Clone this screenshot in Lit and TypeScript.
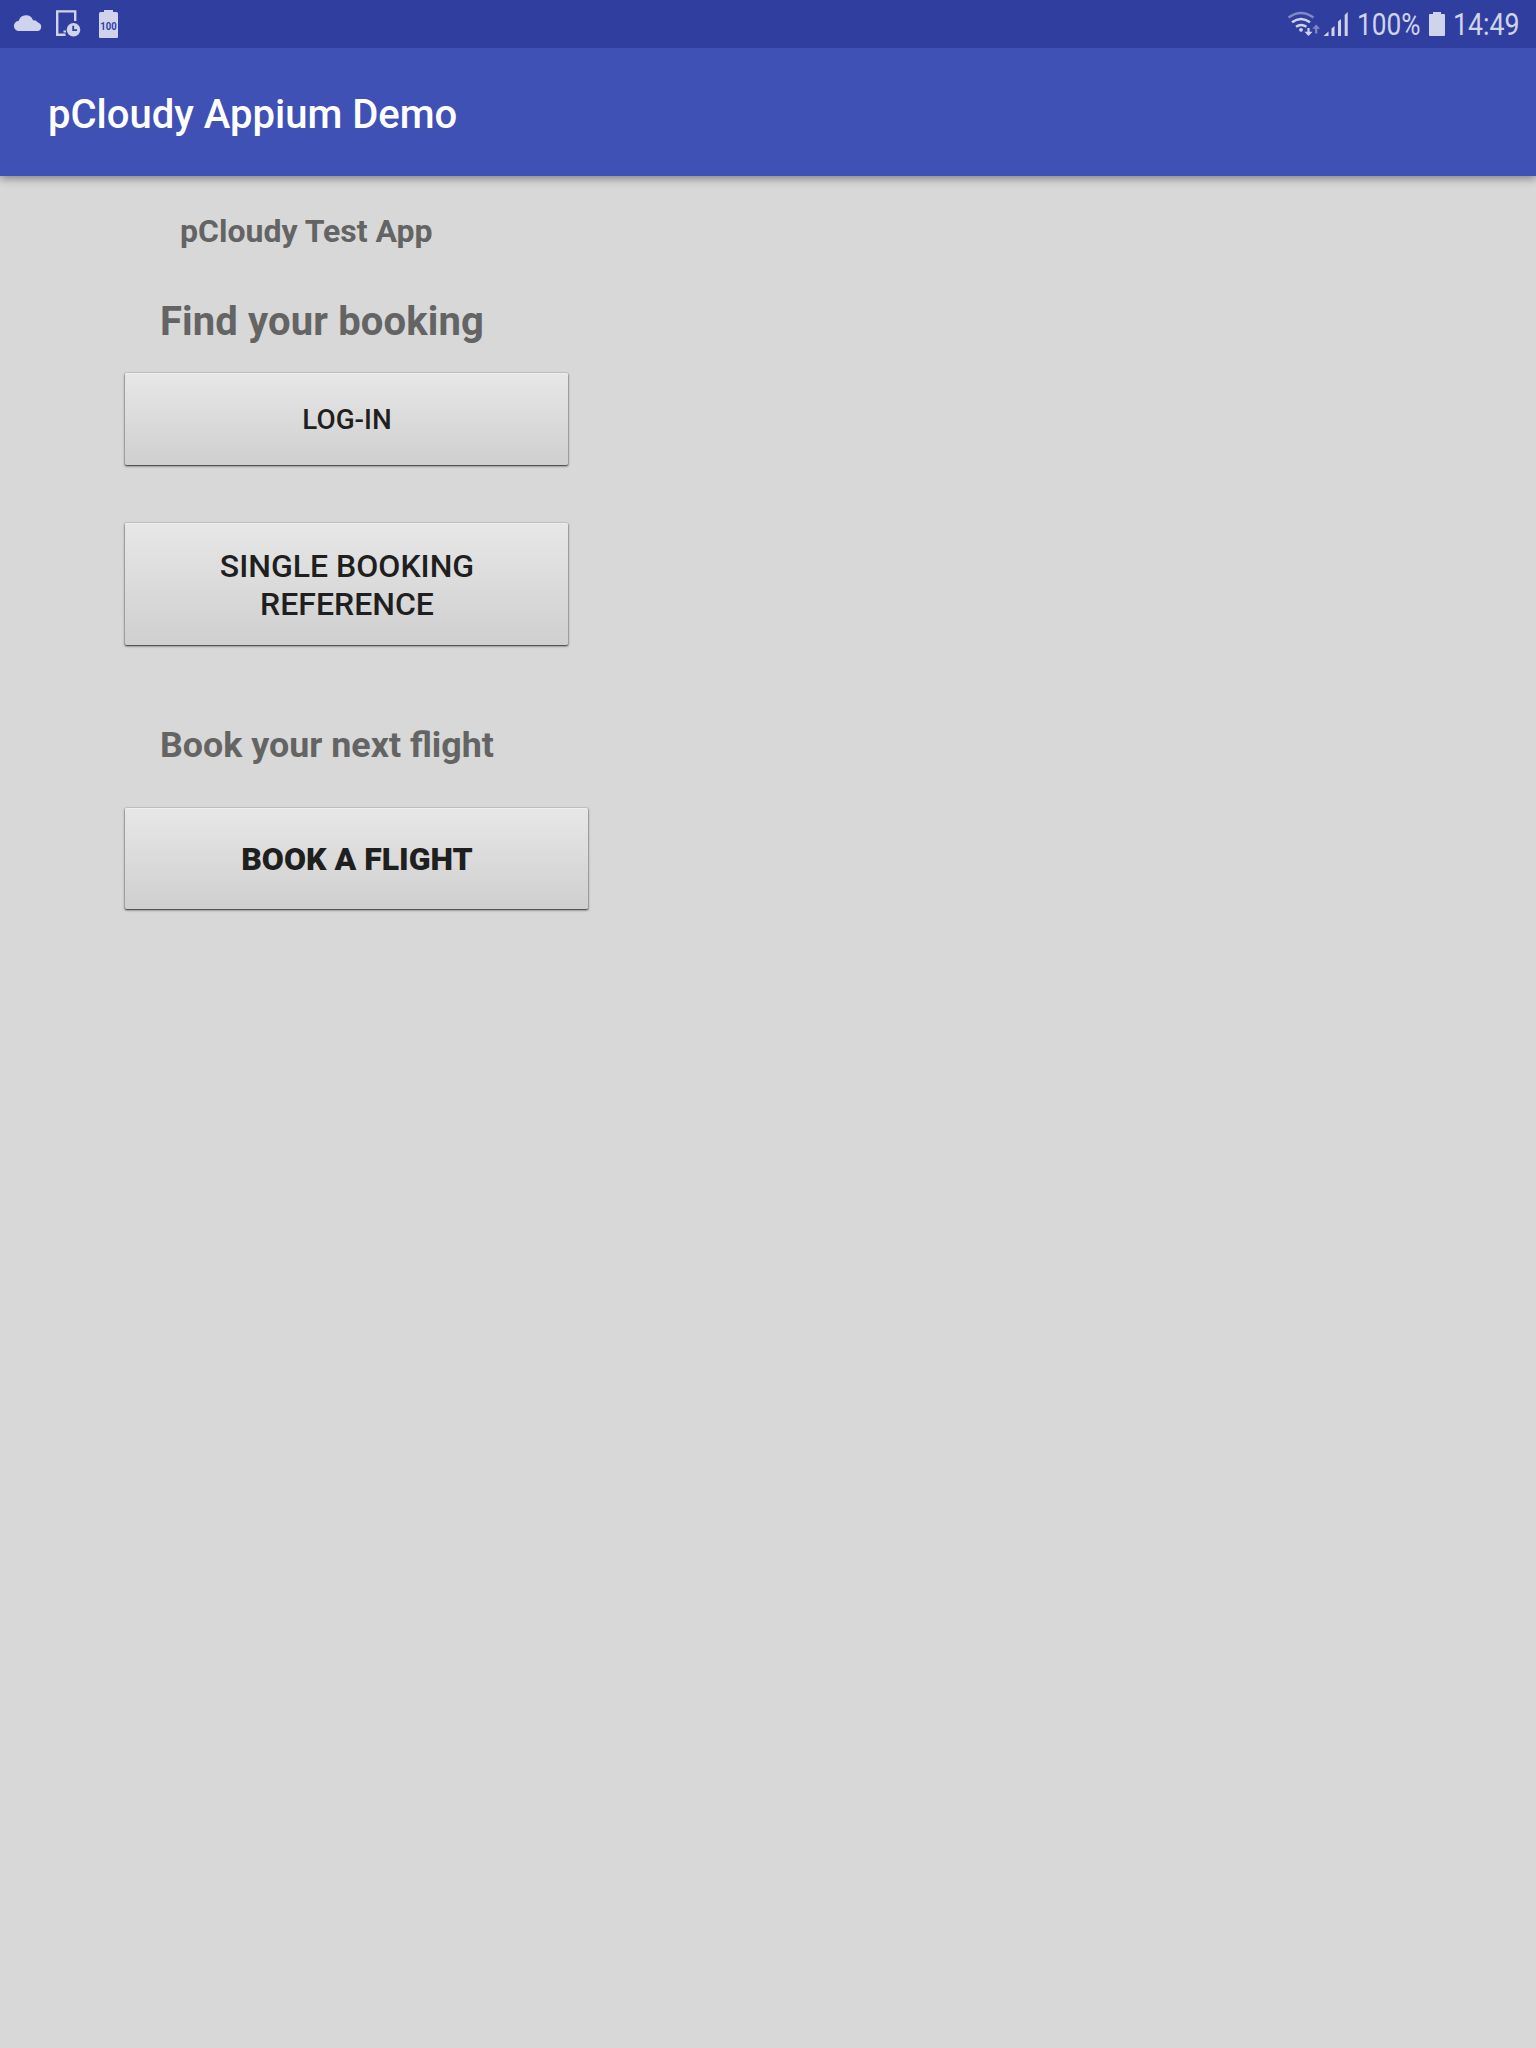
import { LitElement, html, css } from "lit";
import { customElement } from "lit/decorators.js";

@customElement("app-root")
export class AppRoot extends LitElement {
  static styles = css`
    :host { display: block; width: 1536px; height: 2048px; background: #d8d8d8; font-family: Roboto, sans-serif; overflow: hidden; }
    * { box-sizing: border-box; }
    .status { position: relative; z-index: 1; height: 48px; padding: 0 14px 0 12px; background: #303f9f; display: flex; justify-content: space-between; }
    .group { display: flex; }
    svg { display: block; height: 48px; fill: #cfd3ec; font-family: Roboto, sans-serif; overflow: visible; }
    .cloud { width: 42px; }
    .device { width: 42px; }
    .charge { width: 24px; }
    .wifi { width: 36px; }
    .signal { width: 34px; }
    .pct { width: 71px; }
    .battery { width: 25px; }
    .time { width: 71px; }
    .line { fill: none; stroke: #cfd3ec; stroke-width: 2.4; }
    .dim { opacity: .5; }
    .hands { fill: none; stroke: #303f9f; stroke-width: 1.8; }
    .num { font-size: 30.5px; }
    .level { font-size: 11px; font-weight: 700; fill: #303f9f; }
    .bar { height: 128px; padding-left: 48px; background: #3f51b5; display: flex; align-items: center; color: #fff; box-shadow: 0 2px 9px rgba(0,0,0,.45); }
    .title { font-size: 40px; font-weight: 500; line-height: 48px; white-space: nowrap; margin: 6px 0 0; }
    main { display: flex; flex-direction: column; align-items: flex-start; padding: 36px 0 0 125px; color: #646464; }
    h2 { margin: 0; font-weight: 700; white-space: nowrap; }
    .app { font-size: 32px; line-height: 38px; margin-left: 55px; }
    .find { font-size: 40px; line-height: 48px; letter-spacing: .13px; margin: 48px 0 0 35px; }
    .book { font-size: 35.8px; line-height: 42px; margin: 79px 0 0 35px; }
    button { border: 0; padding: 1px 0 0 1px; font-family: inherit; color: #1f1f1f; font-weight: 500; background: linear-gradient(#e7e7e7, #cfcfcf); border-radius: 2px; box-shadow: inset 0 1px 0 #efefef, 0 0 1px 0 rgba(0,0,0,.5), 0 1px 2px 1px rgba(0,0,0,.25), 0 1px 1px 0 rgba(0,0,0,.5); }
    .login { width: 443px; height: 92px; font-size: 27.800px; margin-top: 27px; padding-top: 0; }
    .single { width: 443px; height: 122px; font-size: 32px; line-height: 38px; margin-top: 58px; }
    .flight { width: 463px; height: 101px; font-size: 32px; font-weight: 900; margin-top: 42px; padding-top: 0; }
  `;

  render() {
    return html`
      <div class="status">
        <div class="group">
          <svg class="cloud" viewBox="12 0 42 48"><path d="M19.200 31a5.100 5.100 0 0 1-.4-10.200 7.400 7.400 0 0 1 14.200-.6A5.500 5.500 0 0 1 38 22.400 4.500 4.500 0 0 1 38 31z"/></svg>
          <svg class="device" viewBox="54 0 42 48">
            <path class="line" d="M65.500 34.800H57.200V11.400H75.200V21"/>
            <circle cx="73.500" cy="29.800" r="6.800"/><rect x="63.500" y="30.500" width="2.500" height="2"/>
            <path class="hands" d="M73.200 25.800V30.200H77"/>
          </svg>
          <svg class="charge" viewBox="96 0 24 48">
            <path d="M99 13.500q0-1.500 1.500-1.500H104v-2h9v2h3.500q1.500 0 1.500 1.500V37q0 1-1 1H100q-1 0-1-1z"/>
            <text class="level" x="100.300" y="30" textLength="16.400" lengthAdjust="spacingAndGlyphs">100</text>
          </svg>
        </div>
        <div class="group">
          <svg class="wifi" viewBox="1285 0 36 48">
            <path class="line dim" d="M1288.500 17.500Q1301 8.500 1313.500 17.500"/>
            <path class="line" d="M1292 22.300Q1301 15.500 1310 22.300M1296 26.800Q1301 23.300 1306.500 26.800"/>
            <circle cx="1301" cy="29.800" r="1.900"/>
            <path d="M1307.400 28h2.200v3.800h2.900l-4 4.200-4-4.200h2.900z"/>
            <path class="dim" d="M1315.100 33.500v-4.700h-2.800l3.900-4.300 3.900 4.300h-2.800v4.700z"/>
          </svg>
          <svg class="signal" viewBox="1321 0 34 48">
            <path d="M1323.500 36l5-4.500V36zM1331.500 28.500l3-2.500v10h-3zM1338 21.500l3-2.500v17h-3zM1344.700 15l3-3v24h-3z"/>
          </svg>
          <svg class="pct" viewBox="1355 0 71 48"><text class="num" x="1357" y="35.200" textLength="63.500" lengthAdjust="spacingAndGlyphs">100%</text></svg>
          <svg class="battery" viewBox="1426 0 25 48"><path d="M1429 15q0-1 1-1h3v-2h8v2h3q1 0 1 1v20q0 1-1 1h-14q-1 0-1-1z"/></svg>
          <svg class="time" viewBox="1451 0 71 48"><text class="num" x="1453" y="35.200" textLength="66.500" lengthAdjust="spacingAndGlyphs">14:49</text></svg>
        </div>
      </div>
      <header class="bar"><h1 class="title">pCloudy Appium Demo</h1></header>
      <main>
        <h2 class="app">pCloudy Test App</h2>
        <h2 class="find">Find your booking</h2>
        <button class="login">LOG-IN</button>
        <button class="single">SINGLE BOOKING<br />REFERENCE</button>
        <h2 class="book">Book your next flight</h2>
        <button class="flight">BOOK A FLIGHT</button>
      </main>`;
  }
}
